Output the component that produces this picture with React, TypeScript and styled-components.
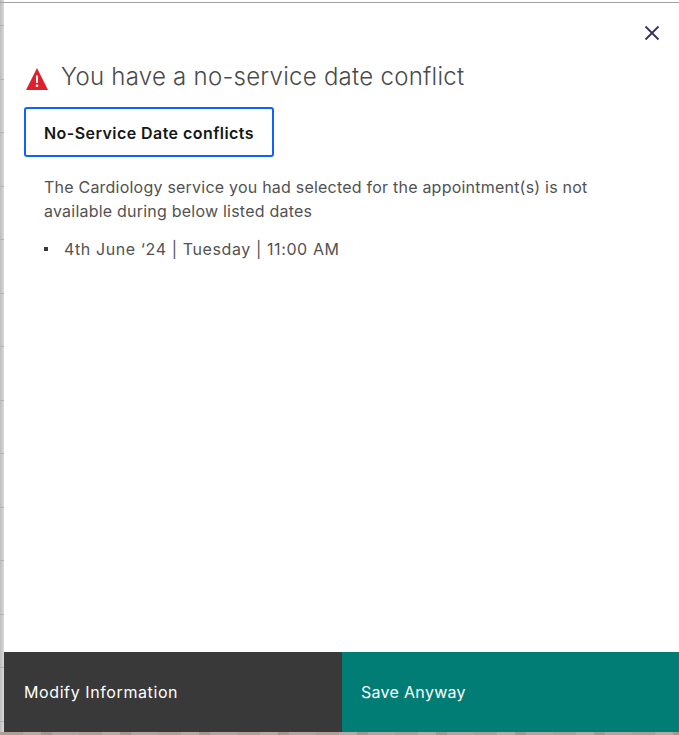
import React from 'react'
import styled, { createGlobalStyle } from 'styled-components'

const fontStack = '"Inter", "Noto Sans", "Liberation Sans", sans-serif'

const GlobalStyle = createGlobalStyle`
  html, body {
    margin: 0;
    padding: 0;
    background: #ffffff;
  }

  * {
    box-sizing: border-box;
  }
`

const Backdrop = styled.div`
  display: flex;
  width: 679px;
  height: 735px;
  overflow: hidden;
  padding: 3px 0 3px 4px;
  background:
    linear-gradient(#a3a3a3, #a3a3a3) top 2px left 0 / 100% 1px no-repeat,
    repeating-linear-gradient(90deg, #ac9f98 0 23px, #b6aaa3 23px 41px, #a3978f 41px 52px, #b1a69f 52px 79px) bottom 0 left 0 / 100% 3px no-repeat,
    repeating-linear-gradient(#b4b4b4 0 1px, transparent 1px 53.5px) left 0 top 25px / 4px 100% no-repeat,
    linear-gradient(90deg, #bdbdbd, #d9d9d9) left 0 top 0 / 4px 100% no-repeat,
    #ffffff;
`

const Dialog = styled.section`
  display: flex;
  flex: 1;
  flex-direction: column;
  background: #ffffff;
  font-family: ${fontStack};
`

const Header = styled.header`
  display: flex;
  justify-content: flex-end;
  height: 58px;
  padding: 20px 17px 0 0;
`

const CloseButton = styled.button`
  display: flex;
  width: 20px;
  height: 20px;
  padding: 0;
  border: 0;
  background: none;
  color: #38325f;
`

const Content = styled.div`
  flex: 1;
  padding: 0 20px;
`

const TitleRow = styled.div`
  display: flex;
  align-items: flex-start;
  gap: 13px;
  height: 36px;
  margin-bottom: 10px;
  padding-left: 2px;
`

const AlertIcon = styled.svg`
  flex: none;
  margin-top: 7px;
`

const Title = styled.h2`
  margin: -2px 0 0;
  color: #4a4a4a;
  font-size: 24px;
  font-weight: 300;
  letter-spacing: 0.26px;
  line-height: 36px;
`

const Tab = styled.div`
  display: inline-flex;
  align-items: center;
  height: 50px;
  padding: 2px 18px 0;
  border: 2px solid #0f62fe;
  border-radius: 3px;
  color: #161616;
  font-size: 16px;
  font-weight: 600;
  letter-spacing: 0.44px;
`

const Panel = styled.div`
  padding: 18px 20px 0;
  color: #525252;
  font-size: 16px;
  line-height: 24px;
`

const Message = styled.p`
  margin: 0 0 14px;
  letter-spacing: 0.22px;
`

const DateList = styled.ul`
  margin: 0;
  padding: 0;
  list-style: none;
`

const DateItem = styled.li`
  display: flex;
  align-items: center;
  gap: 16px;
  letter-spacing: 0.6px;

  &::before {
    content: '';
    width: 4px;
    height: 4px;
    background: #393939;
  }
`

const Footer = styled.footer`
  display: grid;
  grid-template-columns: 338px 1fr;
  height: 80px;
`

const FooterButton = styled.button<{ $primary?: boolean }>`
  display: flex;
  align-items: center;
  padding: 0 ${({ $primary }) => ($primary ? '19px' : '20px')};
  border: 0;
  background: ${({ $primary }) => ($primary ? '#017d75' : '#393939')};
  color: #ffffff;
  font-family: ${fontStack};
  font-size: 16px;
  letter-spacing: ${({ $primary }) => ($primary ? '0.3px' : '0.6px')};
`

const App = () => (
  <>
    <GlobalStyle />
    <Backdrop>
      <Dialog>
        <Header>
          <CloseButton aria-label="Close">
            <svg width="20" height="20" viewBox="0 0 20 20" fill="none" stroke="currentColor" strokeWidth="1.8">
              <path d="M3.5 3.5 16.5 16.5M16.5 3.5 3.5 16.5" />
            </svg>
          </CloseButton>
        </Header>
        <Content>
          <TitleRow>
            <AlertIcon width="22" height="22" viewBox="0 0 22 22" aria-hidden="true">
              <path d="M11 0 22 22H0Z" fill="#e01f2d" />
              <path d="M9.9 7.5h2.2l-.3 7.5h-1.6Z" fill="#ffffff" />
              <circle cx="11" cy="17.8" r="1.3" fill="#ffffff" />
            </AlertIcon>
            <Title>You have a no-service date conflict</Title>
          </TitleRow>
          <Tab>No-Service Date conflicts</Tab>
          <Panel>
            <Message>
              The Cardiology service you had selected for the appointment(s) is not available during below listed dates
            </Message>
            <DateList>
              <DateItem>4th June ‘24 | Tuesday | 11:00 AM</DateItem>
            </DateList>
          </Panel>
        </Content>
        <Footer>
          <FooterButton>Modify Information</FooterButton>
          <FooterButton $primary>Save Anyway</FooterButton>
        </Footer>
      </Dialog>
    </Backdrop>
  </>
)

export default App
